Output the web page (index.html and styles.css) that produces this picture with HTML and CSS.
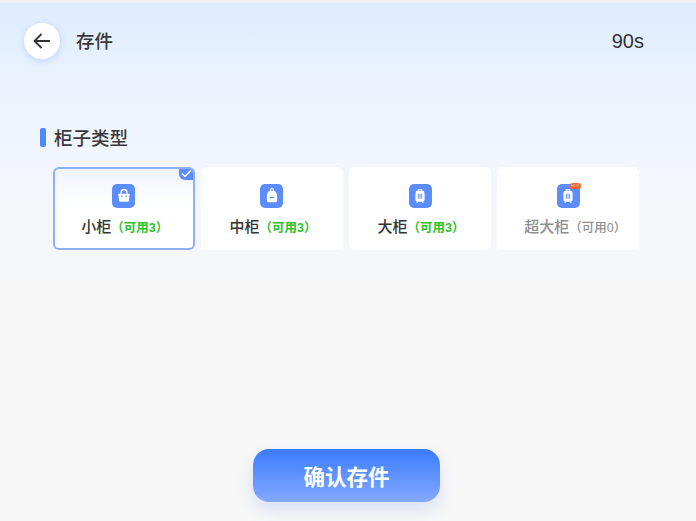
FILE: index.html
```html
<!DOCTYPE html>
<html lang="zh-CN">
<head>
<meta charset="utf-8">
<title>存件</title>
<link rel="stylesheet" href="styles.css">
</head>
<body>
<div class="page">
  <header class="header">
    <div class="header-left">
      <button class="back" aria-label="返回">
        <svg width="20" height="20" viewBox="0 0 20 20"><path d="M18 10H2.500M9.500 3L2.500 10L9.500 17" fill="none" stroke="#333" stroke-width="1.800"/></svg>
      </button>
      <span class="title">存件</span>
    </div>
    <span class="timer">90s</span>
  </header>

  <section class="section">
    <h2 class="section-title">柜子类型</h2>
    <div class="cards">
      <div class="card selected">
        <span class="check"><svg width="11" height="9" viewBox="0 0 11 9"><path d="M1 4.500L4 7.500L10 1.200" fill="none" stroke="#fff" stroke-width="1.400"/></svg></span>
        <span class="icon"><svg width="16" height="16" viewBox="0 0 14 14"><path d="M4.500 5V3.800a2.500 2.500 0 0 1 5 0V5" fill="none" stroke="#fff" stroke-width="1.200"/><path d="M2 5h10l-.7 6.200a1 1 0 0 1-1 .8H3.700a1 1 0 0 1-1-.8z" fill="#fff"/><circle cx="5" cy="7.200" r=".7" fill="#5b8dff"/><circle cx="9" cy="7.200" r=".7" fill="#5b8dff"/></svg></span>
        <div class="label">小柜<span class="count">（可用3）</span></div>
      </div>
      <div class="card">
        <span class="icon"><svg width="16" height="16" viewBox="0 0 14 14"><path d="M5.500 2.500V2a1.500 1.500 0 0 1 3 0v.5" fill="none" stroke="#fff"/><path d="M7 2.200c2.800 0 4.500 2 4.500 4.500V11a1.500 1.500 0 0 1-1.500 1.500H4A1.500 1.500 0 0 1 2.500 11V6.700C2.500 4.200 4.200 2.200 7 2.200z" fill="#fff"/><rect x="5" y="7.800" width="4" height="1.100" fill="#5b8dff"/></svg></span>
        <div class="label">中柜<span class="count">（可用3）</span></div>
      </div>
      <div class="card">
        <span class="icon"><svg width="16" height="16" viewBox="0 0 14 14"><path d="M5.500 2.500V1.500h3v1" fill="none" stroke="#fff"/><rect x="3" y="2.500" width="8" height="9.500" rx="1.800" fill="#fff"/><path d="M5.500 5v4.500M7 5v4.500M8.500 5v4.500" stroke="#5b8dff" stroke-width=".8"/><path d="M4.500 12v1.200M9.500 12v1.200" stroke="#fff"/></svg></span>
        <div class="label">大柜<span class="count">（可用3）</span></div>
      </div>
      <div class="card disabled">
        <span class="icon"><svg width="16" height="16" viewBox="0 0 14 14"><path d="M5.500 2.500V1.500h3v1" fill="none" stroke="#fff"/><rect x="3" y="2.500" width="8" height="9.500" rx="1.800" fill="#fff"/><path d="M5.500 5v4.500M7 5v4.500M8.500 5v4.500" stroke="#5b8dff" stroke-width=".8"/><path d="M4.500 12v1.200M9.500 12v1.200" stroke="#fff"/></svg><span class="tag">HOT</span></span>
        <div class="label">超大柜<span class="count">（可用0）</span></div>
      </div>
    </div>
  </section>

  <div class="footer">
    <button class="confirm">确认存件</button>
  </div>
</div>
</body>
</html>
```

FILE: styles.css
```css
* { box-sizing: border-box; }
html, body { margin: 0; padding: 0; }
body { width: 696px; height: 521px; overflow: hidden; background: #f7f7f7; font-family: "Liberation Sans", "Noto Sans CJK SC", sans-serif; color: #333; }
.page { height: 521px; display: flex; flex-direction: column; border-top: 3px solid #efefef; background: linear-gradient(180deg, #deecff 0, #eef4fd 110px, #f4f6fb 190px, #f7f7f7 300px); }
.header { display: flex; justify-content: space-between; align-items: center; padding: 20px 52px 0 24px; }
.header-left { display: flex; align-items: center; gap: 16px; }
.back { width: 36px; height: 36px; padding: 0; border: 0; border-radius: 50%; background: #fff; box-shadow: 0 2px 6px rgba(90,140,255,.25); display: flex; align-items: center; justify-content: center; }
.title { font-size: 18.500px; font-weight: 500; color: #3a3a3a; position: relative; top: -1px; }
.timer { font-size: 20px; color: #333; font-weight: 500; }
.section { padding: 65px 57px 0 40px; }
.section-title { margin: 0; display: flex; align-items: center; gap: 8px; height: 26px; font-size: 18.500px; font-weight: 500; color: #3a3a3a; }
.section-title::before { content: ""; width: 6px; height: 19px; border-radius: 2px; background: #4f87ff; }
.cards { display: grid; grid-template-columns: repeat(4, 1fr); gap: 6.500px; margin: 17px 0 0 13px; }
.card { position: relative; height: 83px; padding-top: 17px; background: #fff; border-radius: 6px; display: flex; flex-direction: column; align-items: center; gap: 9px; overflow: hidden; }
.card.selected { border: 2px solid #8cb0fb; padding-top: 15px; background: linear-gradient(180deg, #eef3fe 0, #fff 36px); }
.check { position: absolute; top: -2px; right: -2px; width: 16px; height: 13px; border-bottom-left-radius: 6px; background: #5b8dff; display: flex; align-items: center; justify-content: center; }
.icon { position: relative; width: 23px; height: 24px; border-radius: 5px; background: #5b8dff; display: flex; align-items: center; justify-content: center; }
.tag { position: absolute; top: -1px; right: -1px; width: 11px; height: 6px; border-radius: 3px 3px 3px 0; background: #f2602e; color: #ffd9c9; font-size: 4px; line-height: 6px; text-align: center; overflow: hidden; }
.label { font-size: 15px; line-height: 20px; font-weight: 500; color: #333; white-space: nowrap; padding-left: 2px; }
.count { font-size: 12.500px; font-weight: 600; color: #2dc22f; }
.disabled .label { color: #8f8f8f; padding-left: 14px; }
.disabled .count { color: #8f8f8f; font-weight: 500; }
.footer { margin-top: auto; padding: 0 3px 19px 0; display: flex; justify-content: center; }
.confirm { width: 187px; height: 53px; border: 0; border-radius: 16px; background: linear-gradient(180deg, #3a7bff 0, #85a9ff 100%); box-shadow: 0 8px 16px rgba(90,130,240,.18); color: #fff; font-family: inherit; font-size: 21.500px; font-weight: 600; }
```
